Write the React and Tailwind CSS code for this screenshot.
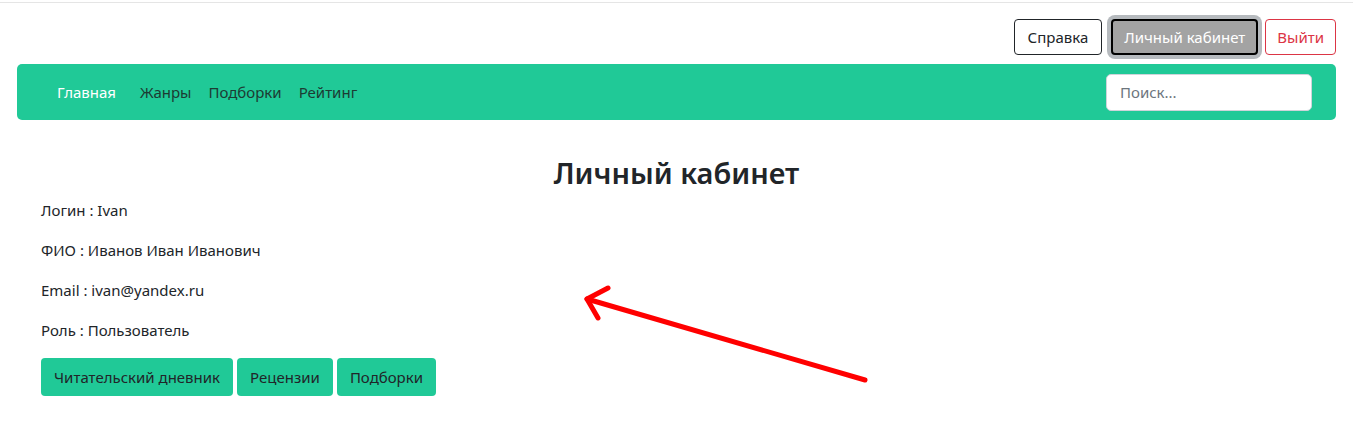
import React from 'react';

export default function App() {
  const info = [
    ['Логин', 'Ivan'],
    ['ФИО', 'Иванов Иван Иванович'],
    ['Email', 'ivan@yandex.ru'],
    ['Роль', 'Пользователь'],
  ];

  return (
    <div className="relative min-h-[436px] bg-white text-[15px] text-[#212529] font-['Noto_Sans',sans-serif]">
      <div className="h-[2px]" />
      <div className="border-t border-[#e5e5e5]" />

      <div className="px-[17px]">
        {/* top buttons */}
        <div className="flex justify-end items-start pt-[16px]">
          <button className="h-[36px] px-[13px] border border-[#212529] rounded-[4px] bg-white text-[#212529]">
            Справка
          </button>
          <button className="ml-[9px] h-[36px] px-[11px] border-2 border-black rounded-[4px] bg-[#a3a3a3] text-white shadow-[0_0_0_4px_#b6babe]">
            Личный кабинет
          </button>
          <button className="ml-[7px] h-[36px] px-[11px] border border-[#dc3545] rounded-[4px] bg-white text-[#dc3545]">
            Выйти
          </button>
        </div>

        {/* navbar */}
        <nav className="mt-[9px] h-[56px] rounded-[5px] bg-[#20c997] flex items-center pl-[40px] pr-[24px]">
          <a className="text-white mr-[24px]">Главная</a>
          <a className="text-[#1d3b33] mr-[17px]">Жанры</a>
          <a className="text-[#1d3b33] mr-[17px]">Подборки</a>
          <a className="text-[#1d3b33]">Рейтинг</a>
          <div className="ml-auto">
            <input
              placeholder="Поиск..."
              className="w-[206px] h-[37px] rounded-[5px] border border-[#ced4da] bg-white px-[13px] text-[15px] placeholder-[#6c757d] outline-none"
            />
          </div>
        </nav>

        {/* content */}
        <div className="px-[24px]">
          <h2 className="mt-[35px] text-center text-[29px] font-semibold leading-[36px] text-[#212529]">
            Личный кабинет
          </h2>
          <div className="mt-[7px]">
            {info.map(([k, v]) => (
              <p key={k} className="leading-[24px] mb-[16px]">
                {k} : {v}
              </p>
            ))}
          </div>
          <div className="flex gap-[4px]">
            {['Читательский дневник', 'Рецензии', 'Подборки'].map((b) => (
              <button key={b} className="h-[38px] px-[13px] rounded-[4px] bg-[#20c997] text-[#212529]">
                {b}
              </button>
            ))}
          </div>
        </div>
      </div>

      {/* red annotation arrow */}
      <svg className="absolute left-0 top-0 pointer-events-none" width="1353" height="436">
        <g stroke="#ff0000" strokeWidth="5" strokeLinecap="round" strokeLinejoin="round" fill="none">
          <line x1="865" y1="380" x2="587" y2="299" />
          <polyline points="608,288 587,299 598,318" />
        </g>
      </svg>
    </div>
  );
}
